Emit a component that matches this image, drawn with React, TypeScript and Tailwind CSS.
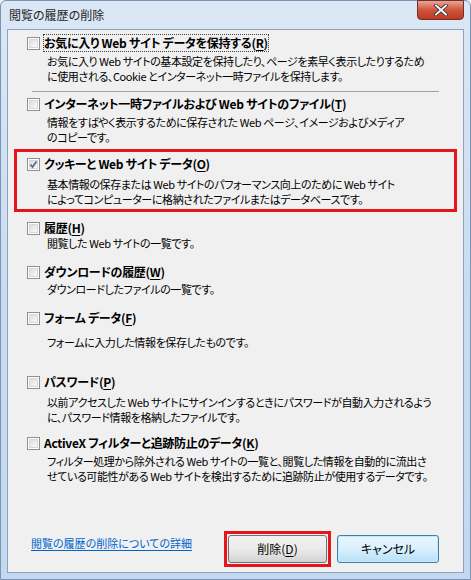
import React from 'react';

const font = "font-['Noto_Sans_CJK_JP','Noto_Sans',sans-serif] [font-feature-settings:'palt']";

const Key: React.FC<{ k: string }> = ({ k }) => <span className="underline underline-offset-2">{k}</span>;

const CheckBox: React.FC<{ checked?: boolean }> = ({ checked }) => (
  <span className="relative flex h-[13px] w-[13px] shrink-0 items-center justify-center border border-[#8f8f8f] bg-white">
    <span className="h-[9px] w-[9px] border border-[#d7d7d7] bg-gradient-to-br from-[#dcdcdc] to-[#fbfbfb]" />
    {checked && (
      <svg viewBox="0 0 13 13" className="absolute left-[-1px] top-[-1px] h-[13px] w-[13px]">
        <path d="M3.5 6.5 L5.5 9 L9.5 3.5" fill="none" stroke="#5a6b96" strokeWidth="1.8" />
      </svg>
    )}
  </span>
);

type Item = {
  label: React.ReactNode;
  lines: string[];
  mt: string;
  gap: string;
  checked?: boolean;
  focus?: boolean;
};

const Option: React.FC<Item> = ({ label, lines, mt, gap, checked, focus }) => (
  <div className={mt}>
    <div className="flex h-[16px] items-center gap-[4px]">
      <CheckBox checked={checked} />
      <span className={`whitespace-nowrap text-[12px] font-bold leading-[16px] tracking-[-0.3px] text-black ${focus ? 'outline outline-1 outline-dotted outline-[#444]' : ''}`}>
        {label}
      </span>
    </div>
    <div className={`${gap} pl-[20px]`}>
      {lines.map((l) => (
        <div key={l} className="whitespace-nowrap text-[11px] leading-[15px] tracking-[-0.4px] text-black">
          {l}
        </div>
      ))}
    </div>
  </div>
);

export default function App() {
  return (
    <div className={`${font} h-[580px] w-[471px] overflow-hidden bg-[#f0f0f0]`}>
      <div className="relative flex h-[580px] w-[471px] flex-col rounded-t-[6px] border border-[#7a94b3] bg-gradient-to-b from-[#dbe7f5] via-[#c9dcf1] to-[#c4d8ef] px-[6px] pb-[6px]">
        {/* Title bar */}
        <div className="flex h-[28px] items-center pl-[2px] text-[12px] text-[#1e1e1e]">閲覧の履歴の削除</div>

        <button className="absolute right-[6px] top-[-1px] flex h-[20px] w-[47px] items-center justify-center rounded-b-[4px] border border-[#6b3030] bg-gradient-to-b from-[#e8a493] via-[#d0533c] to-[#c0391e]">
          <svg viewBox="0 0 16 12" className="h-[12px] w-[16px]">
            <path d="M3 1.5 L13 10.5 M13 1.5 L3 10.5" stroke="#3a3a3a" strokeWidth="3.6" strokeLinecap="square" />
            <path d="M3 1.5 L13 10.5 M13 1.5 L3 10.5" stroke="#ffffff" strokeWidth="1.8" strokeLinecap="square" />
          </svg>
        </button>

        {/* Content panel */}
        <div className="flex flex-1 flex-col border border-[#8da2bd] bg-[#f0f0f0]">
          <div className="pl-[19px]">
            <Option
              mt="mt-[5px]"
              gap="mt-[3px]"
              focus
              label={<>お気に入り Web サイト データを保持する(<Key k="R" />)</>}
              lines={[
                'お気に入り Web サイトの基本設定を保持したり、ページを素早く表示したりするため',
                'に使用される、Cookie とインターネット一時ファイルを保持します。',
              ]}
            />
          </div>
          <div className="ml-[24px] mr-[24px] mt-[7px] h-[1px] bg-[#a0a0a0]" />
          <div className="pl-[19px]">
            <Option
              mt="mt-[4px]"
              gap="mt-[3px]"
              label={<>インターネット一時ファイルおよび Web サイトのファイル(<Key k="T" />)</>}
              lines={[
                '情報をすばやく表示するために保存された Web ページ、イメージおよびメディア',
                'のコピーです。',
              ]}
            />
          </div>

          <div className="mx-[6px] mt-[4px] border-[3px] border-[#e8141c] pb-[2px] pl-[10px]">
            <Option
              mt="mt-[4px]"
              gap="mt-[5px]"
              checked
              label={<>クッキーと Web サイト データ(<Key k="O" />)</>}
              lines={[
                '基本情報の保存または Web サイトのパフォーマンス向上のために Web サイト',
                'によってコンピューターに格納されたファイルまたはデータベースです。',
              ]}
            />
          </div>

          <div className="pl-[19px]">
            <Option
              mt="mt-[8px]"
              gap="mt-[0px]"
              label={<>履歴(<Key k="H" />)</>}
              lines={['閲覧した Web サイトの一覧です。']}
            />
            <Option
              mt="mt-[13px]"
              gap="mt-[2px]"
              label={<>ダウンロードの履歴(<Key k="W" />)</>}
              lines={['ダウンロードしたファイルの一覧です。']}
            />
            <Option
              mt="mt-[13px]"
              gap="mt-[9px]"
              label={<>フォーム データ(<Key k="F" />)</>}
              lines={['フォームに入力した情報を保存したものです。']}
            />
            <Option
              mt="mt-[24px]"
              gap="mt-[5px]"
              label={<>パスワード(<Key k="P" />)</>}
              lines={[
                '以前アクセスした Web サイトにサインインするときにパスワードが自動入力されるよう',
                'に、パスワード情報を格納したファイルです。',
              ]}
            />
            <Option
              mt="mt-[10px]"
              gap="mt-[3px]"
              label={<>ActiveX フィルターと追跡防止のデータ(<Key k="K" />)</>}
              lines={[
                'フィルター処理から除外される Web サイトの一覧と、閲覧した情報を自動的に流出さ',
                'せている可能性がある Web サイトを検出するために追跡防止が使用するデータです。',
              ]}
            />
          </div>

          {/* Footer */}
          <div className="mt-auto flex items-start justify-between pb-[5px] pl-[23px] pr-[24px]">
            <a className="pt-[4px] text-[11px] leading-[16px] text-[#0066cc] underline underline-offset-2" href="#">
              閲覧の履歴の削除についての詳細
            </a>
            <div className="flex items-start gap-[6px]">
              <div className="border-[3px] border-[#e8141c] p-[1px]">
                <button className="flex h-[28px] w-[99px] items-center justify-center rounded-[3px] border border-[#707070] bg-gradient-to-b from-[#f2f2f2] via-[#ebebeb] to-[#d3d3d3] text-[12px] text-black">
                  削除(<Key k="D" />)
                </button>
              </div>
              <button className="mt-[4px] flex h-[28px] w-[102px] items-center justify-center rounded-[3px] border border-[#3c7fb1] bg-gradient-to-b from-[#eaf6fd] via-[#d9f0fc] to-[#b6e0f7] text-[12px] text-black shadow-[inset_0_0_0_1px_#c5e8fb]">
                キャンセル
              </button>
            </div>
          </div>
        </div>
      </div>
    </div>
  );
}
